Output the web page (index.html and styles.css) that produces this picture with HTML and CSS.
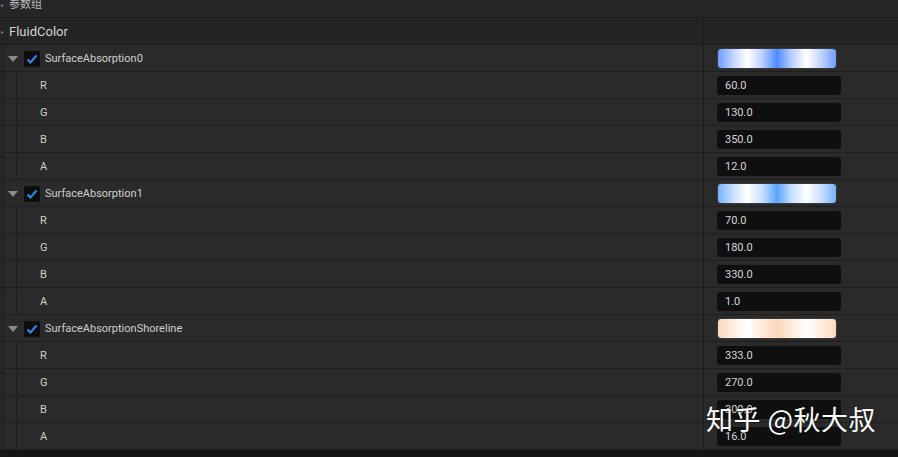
FILE: index.html
```html
<!DOCTYPE html>
<html>
<head>
<meta charset="utf-8">
<link rel="stylesheet" href="styles.css">
</head>
<body>
<div class="panel">
  <div class="header"><span class="caret">▸</span><span class="htext">参数组</span></div>
  <div class="grow">
    <div class="gname"><span class="caret">▸</span>FluidColor</div>
    <div class="gval"></div>
  </div>

  <div class="row parent">
    <div class="name"><div class="gutter"></div><span class="tri"></span><span class="check"><svg viewBox="0 0 16 16" width="16" height="16"><path d="M3.5 8.5 L6.5 11.5 L12.5 4.5" fill="none" stroke="#2f86e8" stroke-width="2.2"/></svg></span><span class="label">SurfaceAbsorption0</span></div>
    <div class="val"><div class="swatch sw0"></div></div>
  </div>
  <div class="row"><div class="name"><div class="gutter"></div><div class="indent"></div><span class="clabel">R</span></div><div class="val"><div class="box">60.0</div></div></div>
  <div class="row"><div class="name"><div class="gutter"></div><div class="indent"></div><span class="clabel">G</span></div><div class="val"><div class="box">130.0</div></div></div>
  <div class="row"><div class="name"><div class="gutter"></div><div class="indent"></div><span class="clabel">B</span></div><div class="val"><div class="box">350.0</div></div></div>
  <div class="row"><div class="name"><div class="gutter"></div><div class="indent"></div><span class="clabel">A</span></div><div class="val"><div class="box">12.0</div></div></div>

  <div class="row parent">
    <div class="name"><div class="gutter"></div><span class="tri"></span><span class="check"><svg viewBox="0 0 16 16" width="16" height="16"><path d="M3.5 8.5 L6.5 11.5 L12.5 4.5" fill="none" stroke="#2f86e8" stroke-width="2.2"/></svg></span><span class="label">SurfaceAbsorption1</span></div>
    <div class="val"><div class="swatch sw1"></div></div>
  </div>
  <div class="row"><div class="name"><div class="gutter"></div><div class="indent"></div><span class="clabel">R</span></div><div class="val"><div class="box">70.0</div></div></div>
  <div class="row"><div class="name"><div class="gutter"></div><div class="indent"></div><span class="clabel">G</span></div><div class="val"><div class="box">180.0</div></div></div>
  <div class="row"><div class="name"><div class="gutter"></div><div class="indent"></div><span class="clabel">B</span></div><div class="val"><div class="box">330.0</div></div></div>
  <div class="row"><div class="name"><div class="gutter"></div><div class="indent"></div><span class="clabel">A</span></div><div class="val"><div class="box">1.0</div></div></div>

  <div class="row parent">
    <div class="name"><div class="gutter"></div><span class="tri"></span><span class="check"><svg viewBox="0 0 16 16" width="16" height="16"><path d="M3.5 8.5 L6.5 11.5 L12.5 4.5" fill="none" stroke="#2f86e8" stroke-width="2.2"/></svg></span><span class="label">SurfaceAbsorptionShoreline</span></div>
    <div class="val"><div class="swatch sw2"></div></div>
  </div>
  <div class="row"><div class="name"><div class="gutter"></div><div class="indent"></div><span class="clabel">R</span></div><div class="val"><div class="box">333.0</div></div></div>
  <div class="row"><div class="name"><div class="gutter"></div><div class="indent"></div><span class="clabel">G</span></div><div class="val"><div class="box">270.0</div></div></div>
  <div class="row"><div class="name"><div class="gutter"></div><div class="indent"></div><span class="clabel">B</span></div><div class="val"><div class="box">300.0</div></div></div>
  <div class="row"><div class="name"><div class="gutter"></div><div class="indent"></div><span class="clabel">A</span></div><div class="val"><div class="box">16.0</div></div></div>

  <div class="watermark">知乎 @秋大叔</div>
</div>
</body>
</html>
```
FILE: styles.css
```css
html, body {
  margin: 0;
  padding: 0;
  background: #161616;
}
body {
  width: 898px;
  height: 457px;
  overflow: hidden;
  font-family: Roboto, "Noto Sans", sans-serif;
}
.panel {
  position: relative;
  width: 898px;
}
.header {
  height: 17px;
  background: #262626;
  border-bottom: 1px solid #1a1a1a;
  display: flex;
  align-items: flex-start;
  color: #bdbdbd;
  font-size: 11px;
  font-family: "Noto Sans CJK SC", sans-serif;
  overflow: hidden;
}
.header .caret {
  line-height: 9px;
}
.caret {
  font-size: 6px;
  color: #7a7a7a;
  width: 9px;
  padding-left: 1px;
  box-sizing: border-box;
}
.htext {
  line-height: 11px;
  margin-top: -2px;
}
.grow {
  height: 26px;
  display: grid;
  grid-template-columns: 703px 1fr;
  background: #242424;
  border-bottom: 1px solid #1b1b1b;
}
.gname {
  display: flex;
  align-items: center;
  font-size: 13px;
  color: #d2d2d2;
}
.gval {
  border-left: 1px solid #1b1b1b;
}
.row {
  height: 26px;
  display: grid;
  grid-template-columns: 703px 1fr;
  background: #2a2a2a;
  border-bottom: 1px solid #1e1e1e;
}
.name {
  display: flex;
  align-items: center;
  height: 26px;
  padding-top: 1px;
  box-sizing: border-box;
}
.gutter {
  width: 3px;
  height: 100%;
  background: #262626;
  border-right: 1px solid #1d1d1d;
  flex: none;
}
.indent {
  width: 12px;
  height: 100%;
  border-right: 1px solid #1d1d1d;
  flex: none;
}
.tri {
  width: 0;
  height: 0;
  border-left: 5px solid transparent;
  border-right: 5px solid transparent;
  border-top: 6px solid #8c8c8c;
  margin-left: 4px;
  margin-right: 6px;
  flex: none;
}
.check {
  width: 16px;
  height: 16px;
  background: #0d0d0d;
  border-radius: 2px;
  flex: none;
  display: flex;
}
.label {
  margin-left: 5px;
  font-size: 11px;
  color: #cfcfcf;
}
.clabel {
  margin-left: 23px;
  font-size: 11px;
  color: #cfcfcf;
}
.val {
  border-left: 1px solid #1b1b1b;
  display: flex;
  align-items: center;
  padding-left: 13px;
}
.box {
  width: 124px;
  height: 19px;
  box-sizing: border-box;
  background: #0f0f0f;
  border-radius: 3px;
  padding-left: 8px;
  font-size: 11px;
  line-height: 19px;
  color: #d6d6d6;
}
.swatch {
  width: 120px;
  height: 21px;
  border-radius: 4px;
  box-sizing: border-box;
  border: 1px solid #3a3a3a;
}
.sw0 {
  background: linear-gradient(90deg, #6f9cff 0%, #c9daff 14%, #ffffff 25%, #b8cdff 38%, #4e8aff 50%, #b8cdff 62%, #ffffff 75%, #c9daff 86%, #6f9cff 100%);
}
.sw1 {
  background: linear-gradient(90deg, #77b2ff 0%, #cfe4ff 14%, #ffffff 25%, #c4ddff 38%, #5aa4ff 50%, #c4ddff 62%, #ffffff 75%, #cfe4ff 86%, #77b2ff 100%);
}
.sw2 {
  background: linear-gradient(90deg, #fcd9bd 0%, #fff0e4 14%, #ffffff 25%, #fde9d9 38%, #fad6b8 50%, #fde9d9 62%, #ffffff 75%, #fff0e4 86%, #fcd9bd 100%);
}
.watermark {
  position: absolute;
  left: 706px;
  top: 399px;
  font-family: "Noto Sans CJK SC", sans-serif;
  font-size: 27px;
  color: #ffffff;
  text-shadow: 0 0 2px rgba(0,0,0,0.6);
  white-space: nowrap;
  letter-spacing: 0.5px;
}
```
